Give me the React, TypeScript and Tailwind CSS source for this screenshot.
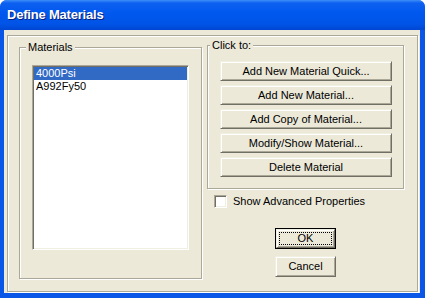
const MATERIALS = ["4000Psi", "A992Fy50"];
const ACTIONS = [
  "Add New Material Quick...",
  "Add New Material...",
  "Add Copy of Material...",
  "Modify/Show Material...",
  "Delete Material",
];

const etched = "border border-[#ACA899] shadow-[inset_1px_1px_0_#fff,1px_1px_0_#fff]";
const raised =
  "border border-t-[#F1EFE2] border-l-[#F1EFE2] border-r-[#716F64] border-b-[#716F64] shadow-[inset_1px_1px_0_#fff,inset_-1px_-1px_0_#ACA899] bg-[#ECE9D8]";
const sunken =
  "border border-t-[#ACA899] border-l-[#ACA899] border-r-white border-b-white shadow-[inset_1px_1px_0_#716F64,inset_-1px_-1px_0_#F1EFE2]";

function GroupLabel({ text, className }: { text: string; className: string }) {
  return (
    <div className={`-mt-[7px] h-[13px] self-start bg-[#ECE9D8] px-[2px] leading-[13px] ${className}`}>{text}</div>
  );
}

export default function App() {
  return (
    <div className="flex h-[298px] w-[425px] flex-col overflow-hidden rounded-t-[7px] bg-[#0A56E6] font-['Liberation_Sans',Arial,sans-serif] text-[11px] text-black">
      {/* Title bar */}
      <div className="flex h-[30px] shrink-0 items-center bg-[linear-gradient(to_bottom,#3D8EF7_0%,#0D60F0_10%,#0058EE_45%,#0054E6_80%,#0046D2_100%)] pl-[7px]">
        <span className="font-['Liberation_Sans',Arial,sans-serif] text-[13px] font-bold tracking-[-0.2px] text-white [text-shadow:1px_1px_0_#0A1E7A]">
          Define Materials
        </span>
      </div>

      {/* Client area */}
      <div className="ml-[4px] mr-[5px] mb-[5px] flex-1 bg-[#ECE9D8] pt-[5px] pl-[3px]">
        <div className={`flex h-[257px] w-[411px] items-start ${etched}`}>
          {/* Materials group */}
          <div className={`ml-[11px] mt-[11px] flex h-[232px] w-[183px] flex-col ${etched}`}>
            <GroupLabel text="Materials" className="ml-[6px]" />
            <div className={`ml-[12px] mt-[11px] h-[185px] w-[157px] bg-white p-[1px] ${sunken}`}>
              {MATERIALS.map((m, i) => (
                <div
                  key={m}
                  className={`h-[13px] pl-[2px] leading-[13px] ${i === 0 ? "bg-[#316AC5] text-white" : ""}`}
                >
                  {m}
                </div>
              ))}
            </div>
          </div>

          {/* Right column */}
          <div className="ml-[5px] mt-[9px] flex w-[197px] flex-col">
            <div className={`flex h-[144px] flex-col ${etched}`}>
              <GroupLabel text="Click to:" className="ml-[2px]" />
              <div className="ml-[12px] mt-[9px] flex flex-col gap-[4px]">
                {ACTIONS.map((a) => (
                  <button
                    key={a}
                    className={`flex h-[20px] w-[172px] items-center justify-center leading-[13px] ${raised}`}
                  >
                    {a}
                  </button>
                ))}
              </div>
            </div>

            <label className="ml-[7px] mt-[6px] flex items-center gap-[6px]">
              <span className={`block h-[13px] w-[13px] bg-white ${sunken}`} />
              <span className="leading-[13px]">Show Advanced Properties</span>
            </label>

            <button className="ml-[68px] mt-[20px] h-[21px] w-[61px] border border-black bg-[#ECE9D8]">
              <div className={`flex h-full w-full items-center justify-center p-[2px] ${raised}`}>
                <div className="flex h-full w-full items-center justify-center border border-dotted border-black leading-[13px]">
                  OK
                </div>
              </div>
            </button>

            <button
              className={`ml-[68px] mt-[7px] flex h-[21px] w-[61px] items-center justify-center leading-[13px] ${raised}`}
            >
              Cancel
            </button>
          </div>
        </div>
      </div>
    </div>
  );
}
